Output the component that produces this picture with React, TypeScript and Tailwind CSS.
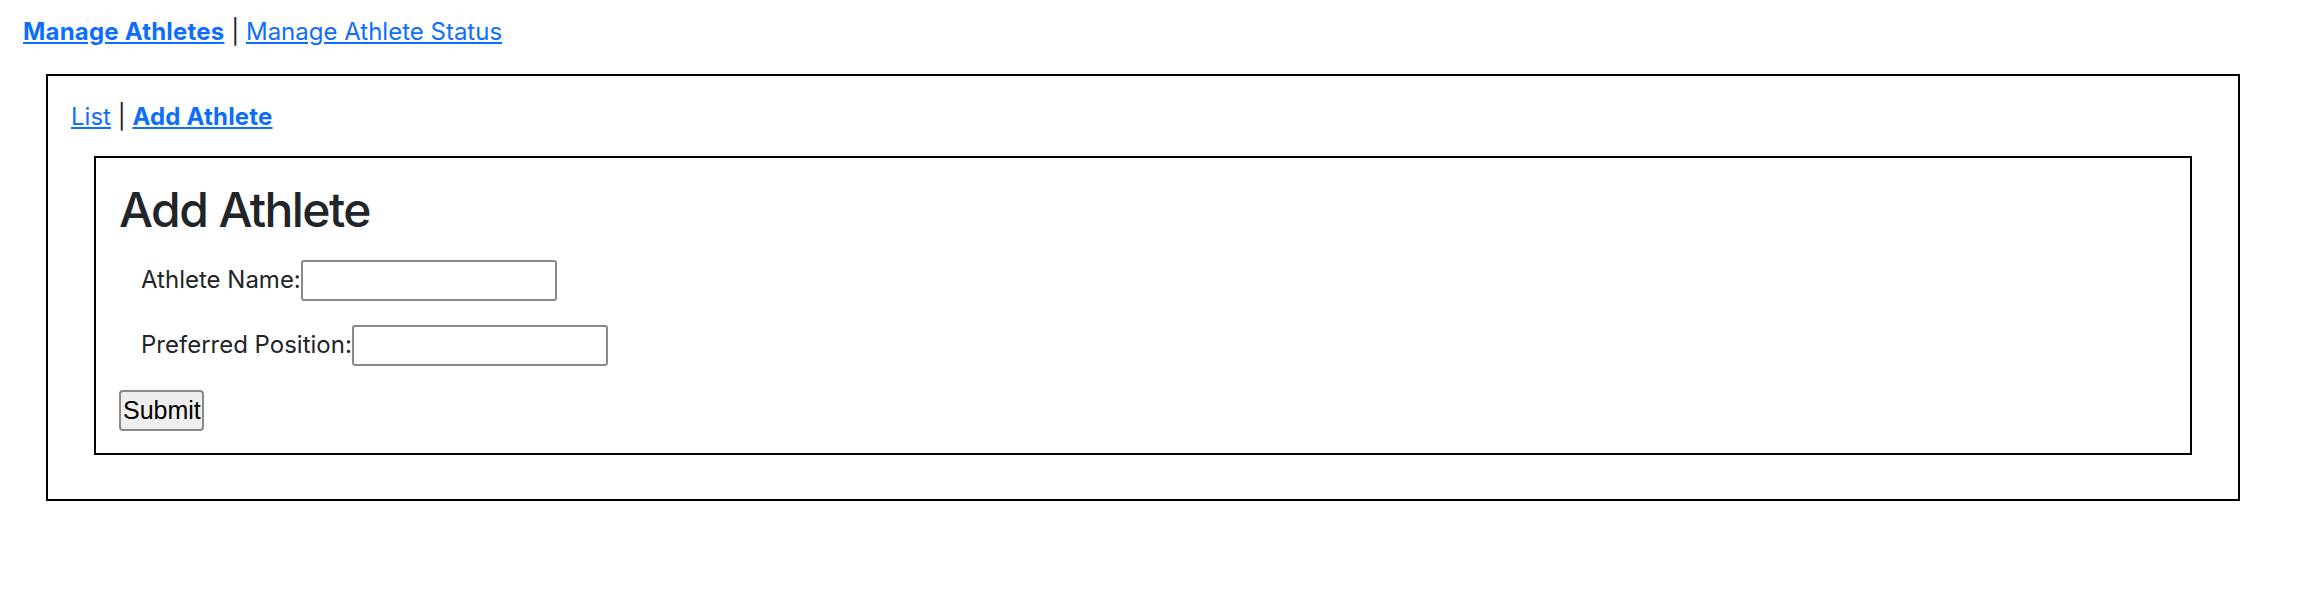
export default function App() {
  return (
    <div className="min-h-[610px] bg-white pt-[14px] pl-[23px] font-['Inter',sans-serif] text-[24px] leading-[36px] text-[#212529]">
      <div>
        <a href="#" className="font-bold tracking-[0.2px] text-[#0d6efd] underline">
          Manage Athletes
        </a>{" "}
        |{" "}
        <a href="#" className="text-[#0d6efd] underline">
          Manage Athlete Status
        </a>
      </div>

      <div className="mt-[24px] ml-[23px] w-[2194px] border-2 border-black px-[23px] pt-[23px] pb-[22px]">
        <div className="mb-[21px]">
          <a href="#" className="text-[#0d6efd] underline">
            List
          </a>{" "}
          |{" "}
          <a href="#" className="font-bold tracking-[0.2px] text-[#0d6efd] underline">
            Add Athlete
          </a>
        </div>

        <div className="mx-[23px] mb-[22px] border-2 border-black px-[23px] pt-[23px] pb-[22px]">
          <h2 className="mb-[21px] text-[48px] leading-[57.6px] font-medium tracking-[-1.6px]">Add Athlete</h2>

          <div className="mb-[24px] ml-[22px] flex h-[41px] items-center">
            <label>Athlete Name:</label>
            <input
              type="text"
              className="h-[41px] w-[256px] rounded-[3px] border-2 border-[#8a8a8a] px-[2px]"
            />
          </div>

          <div className="mb-[24px] ml-[22px] flex h-[41px] items-center">
            <label>Preferred Position:</label>
            <input
              type="text"
              className="h-[41px] w-[256px] rounded-[3px] border-2 border-[#8a8a8a] px-[2px]"
            />
          </div>

          <button
            type="submit"
            className="h-[41px] w-[85px] rounded-[4px] border-2 border-[#8a8a8a] bg-[#efefef] px-[2px] font-['Liberation_Sans',Arial,sans-serif] text-[25px] leading-none text-black"
          >
            Submit
          </button>
        </div>
      </div>
    </div>
  );
}
